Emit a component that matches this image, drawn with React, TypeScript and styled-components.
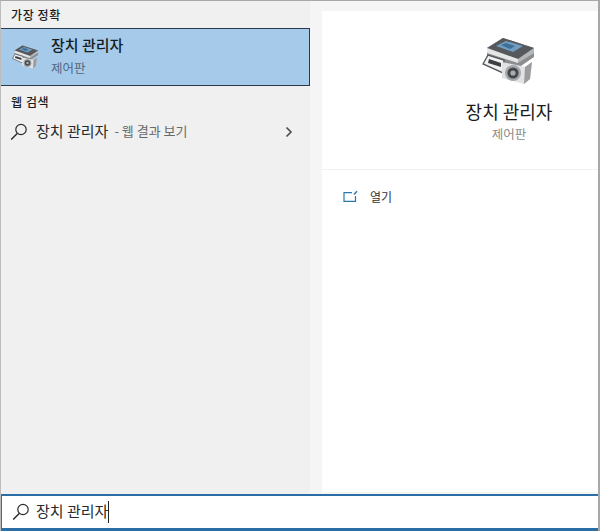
import React from "react";
import styled, { createGlobalStyle } from "styled-components";

const DeviceIcon: React.FC<{ width: number }> = ({ width }) => (
  <svg width={width} height={(width * 48) / 54} viewBox="10 6 54 48">
    <path d="M15 17 L31 7 L62 17 L62 26 L46 37 L15 26 Z" fill="#8b8e91" />
    <path d="M15 17 L31 7 L62 17 L46 28 Z" fill="#55595d" />
    <path d="M24 15 L34 10 L51 15 L41 21 Z" fill="#6f9cc0" />
    <path d="M29 14 L34 12 L43 15 L38 18 Z" fill="#3f6f97" />
    <path d="M15 17 L46 28 L46 32 L15 22 Z" fill="#e6e6e6" />
    <path d="M46 28 L62 17 L62 22 L46 32 Z" fill="#b4b6b8" />
    <path d="M11 33 L16 24 L32 29 L31 42 Z" fill="#f1f1f1" stroke="#55595d" strokeWidth="1.4" />
    <path d="M17 28 L29 32 L29 36 L16 32 Z" fill="#3b3f43" />
    <path d="M30 31 L54 36 L60 31 L58 48 L52 53 L30 47 Z" fill="#e2e2e3" />
    <path d="M53 36 L60 31 L58 48 L52 53 Z" fill="#9a9c9f" />
    <circle cx="41" cy="42" r="8" fill="#a5a8ab" />
    <circle cx="41" cy="42" r="5.6" fill="#43474b" />
    <circle cx="41" cy="42" r="2.6" fill="#a7adb1" />
  </svg>
);

const SearchIcon = () => (
  <svg width="18" height="18" viewBox="0 0 18 18" fill="none" stroke="#2c2c2c" strokeWidth="1.2">
    <circle cx="11" cy="6.5" r="5.2" />
    <path d="M7.2 10.5 L1.2 16.5" strokeWidth="1.5" />
  </svg>
);

const OpenIcon = () => (
  <svg width="15" height="13" viewBox="0 0 15 13" fill="none" stroke="#2b78ad" strokeWidth="1.2">
    <path d="M9 2.6 H1 V11.4 H12.5 V6" />
    <path d="M11 4.5 L14 1.2" strokeWidth="1.5" />
  </svg>
);

const App: React.FC = () => (
  <>
    <GlobalStyle />
    <Window>
      <Panels>
        <LeftPanel>
          <SectionLabel>가장 정확</SectionLabel>
          <BestMatch>
            <DeviceIcon width={27} />
            <MatchText>
              <MatchTitle>장치 관리자</MatchTitle>
              <MatchSub>제어판</MatchSub>
            </MatchText>
          </BestMatch>
          <WebLabel>웹 검색</WebLabel>
          <WebRow>
            <SearchIcon />
            <WebQuery>장치 관리자</WebQuery>
            <WebHint>- 웹 결과 보기</WebHint>
            <Chevron viewBox="0 0 8 12">
              <path d="M1.5 1.5 L6 6 L1.5 10.5" />
            </Chevron>
          </WebRow>
        </LeftPanel>
        <RightPanel>
          <Detail>
            <DeviceIcon width={54} />
            <DetailTitle>장치 관리자</DetailTitle>
            <DetailSub>제어판</DetailSub>
          </Detail>
          <OpenRow>
            <OpenIcon />
            <OpenLabel>열기</OpenLabel>
          </OpenRow>
        </RightPanel>
      </Panels>
      <SearchBar>
        <SearchIcon />
        <SearchValue>장치 관리자</SearchValue>
        <Caret />
      </SearchBar>
    </Window>
  </>
);

export default App;

const GlobalStyle = createGlobalStyle`
  html, body {
    margin: 0;
    padding: 0;
    background: #fff;
  }
  body {
    font-family: "Noto Sans CJK KR", "Noto Sans", sans-serif;
  }
`;

const Window = styled.div`
  display: flex;
  flex-direction: column;
  width: 600px;
  height: 531px;
  box-sizing: border-box;
  border-top: 1px solid #a8a8a8;
  border-left: 1px solid #bcbcbc;
  border-right: 2px solid #a8a8a8;
  background: #f5f5f5;
  overflow: hidden;
`;

const Panels = styled.div`
  display: flex;
  flex: 1;
  min-height: 0;
`;

const LeftPanel = styled.div`
  width: 309px;
  background: #f0f0f0;
`;

const SectionLabel = styled.div`
  height: 27px;
  padding-left: 10px;
  font-size: 12px;
  font-weight: 500;
  line-height: 27px;
  letter-spacing: 0.6px;
  color: #1c1c1c;
`;

const BestMatch = styled.div`
  display: flex;
  align-items: center;
  gap: 12px;
  width: 310px;
  height: 58px;
  box-sizing: border-box;
  margin-left: -1px;
  padding-left: 11px;
  border: 1px solid #2a3a4c;
  background: #a6cbea;
`;

const MatchText = styled.div`
  display: flex;
  flex-direction: column;
  gap: 4px;
`;

const MatchTitle = styled.div`
  margin-top: -2px;
  font-size: 15px;
  font-weight: 500;
  line-height: 20px;
  color: #141c24;
`;

const MatchSub = styled.div`
  font-size: 12.5px;
  line-height: 18px;
  color: #50687f;
`;

const WebLabel = styled(SectionLabel)`
  height: 31px;
  line-height: 31px;
`;

const WebRow = styled.div`
  display: flex;
  align-items: center;
  height: 30px;
  padding-left: 9px;
`;

const WebQuery = styled.span`
  margin: -3px 0 0 8px;
  font-size: 15px;
  color: #2a2a2a;
`;

const WebHint = styled.span`
  margin: -3px 0 0 6px;
  font-size: 13px;
  color: #6a6a6a;
`;

const Chevron = styled.svg`
  width: 8px;
  height: 12px;
  margin-left: auto;
  margin-right: 17px;
  fill: none;
  stroke: #4a4a4a;
  stroke-width: 1.6;
`;

const RightPanel = styled.div`
  flex: 1;
  margin: 10px 0 2px 12px;
  background: #fff;
`;

const Detail = styled.div`
  display: flex;
  flex-direction: column;
  align-items: center;
  height: 159px;
  box-sizing: border-box;
  padding: 26px 0 0 98px;
  border-bottom: 1px solid #f0f0f0;
`;

const DetailTitle = styled.div`
  margin-top: 13px;
  font-size: 18px;
  line-height: 26px;
  color: #1a1a1a;
`;

const DetailSub = styled.div`
  margin-top: 1px;
  font-size: 12.5px;
  line-height: 18px;
  color: #8a8a8a;
`;

const OpenRow = styled.div`
  display: flex;
  align-items: center;
  gap: 12px;
  height: 52px;
  padding-left: 21px;
`;

const OpenLabel = styled.span`
  font-size: 12px;
  color: #333;
`;

const SearchBar = styled.div`
  display: flex;
  flex: none;
  align-items: center;
  height: 37px;
  box-sizing: border-box;
  margin: 0 -2px 0 -1px;
  padding-left: 10px;
  border: 2px solid #2b6ea6;
  border-bottom-width: 3px;
  background: #fff;
`;

const SearchValue = styled.span`
  margin: -2px 0 0 6px;
  font-size: 15px;
  line-height: 20px;
  color: #2a2a2a;
`;

const Caret = styled.span`
  width: 1px;
  height: 22px;
  background: #222;
`;
